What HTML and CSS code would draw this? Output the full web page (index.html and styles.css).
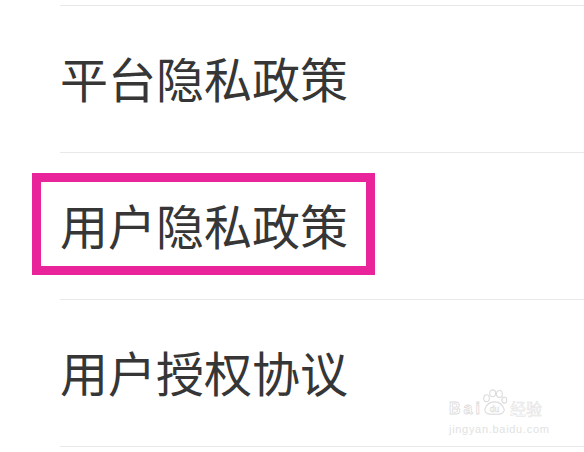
FILE: index.html
```html
<!DOCTYPE html>
<html lang="zh-CN">
<head>
    <meta charset="UTF-8">
    <meta name="viewport" content="width=device-width, initial-scale=1.0">
    <title>隐私设置</title>
    <link rel="stylesheet" href="styles.css">
</head>
<body>
    <ul class="menu">
        <li class="menu-item"><span class="label">平台隐私政策</span></li>
        <li class="menu-item"><span class="label marked">用户隐私政策</span></li>
        <li class="menu-item"><span class="label">用户授权协议</span></li>
    </ul>

    <!-- 水印 -->
    <div class="watermark">
        <div class="wm-top">
            <span class="wm-bai">Bai</span>
            <svg class="wm-paw" width="27" height="27" viewBox="0 0 22 22">
                <g fill="none" stroke="#dcdcdc" stroke-width="0.9">
                    <ellipse cx="4.5" cy="7.5" rx="2.3" ry="2.8"/>
                    <ellipse cx="9.5" cy="3.5" rx="2.4" ry="2.8"/>
                    <ellipse cx="15" cy="4" rx="2.4" ry="2.8"/>
                    <ellipse cx="19" cy="9" rx="2" ry="2.5"/>
                    <path d="M3 17 Q5 10.5 11 10.5 Q17 10.5 19 17 Q19 21 11 20.5 Q3 21 3 17 Z"/>
                </g>
                <text x="11" y="18.5" font-size="7" text-anchor="middle" fill="#fff" stroke="#dcdcdc" stroke-width="0.4" font-family="Liberation Sans, sans-serif">du</text>
            </svg>
            <span class="wm-cn">经验</span>
        </div>
        <div class="wm-url">jingyan.baidu.com</div>
    </div>
</body>
</html>
```

FILE: styles.css
```css
body { margin: 0; background: #fff; font-family: "Noto Sans CJK SC", sans-serif; }
.menu { list-style: none; margin: 5px 0 0 60px; padding: 0; border-top: 1px solid #e9e9e9; }
.menu-item { height: 146px; border-bottom: 1px solid #e9e9e9; display: flex; align-items: center; }
.label { position: relative; font-size: 48px; line-height: 48px; color: #363636; padding-bottom: 4px; }
.marked::after { content: ""; position: absolute; left: -28px; right: -27px; top: -27px; bottom: -23px; border: 9px solid #e9239a; }

.watermark { position: absolute; left: 449px; top: 389px; font-family: "Liberation Sans", sans-serif; }
.wm-top { display: flex; align-items: flex-end; }
.wm-bai { font-size: 16px; font-weight: bold; letter-spacing: 3px; color: #fff; -webkit-text-stroke: 0.8px #dcdcdc; line-height: 14px; }
.wm-paw { margin: 0 2px 0 -2px; }
.wm-cn { font-size: 16px; color: #fff; -webkit-text-stroke: 0.5px #e0e0e0; line-height: 16px; font-family: "Noto Sans CJK SC", sans-serif; }
.wm-url { font-size: 11px; letter-spacing: 0.7px; color: #e2e2e2; margin-top: 8px; line-height: 11px; }
```
